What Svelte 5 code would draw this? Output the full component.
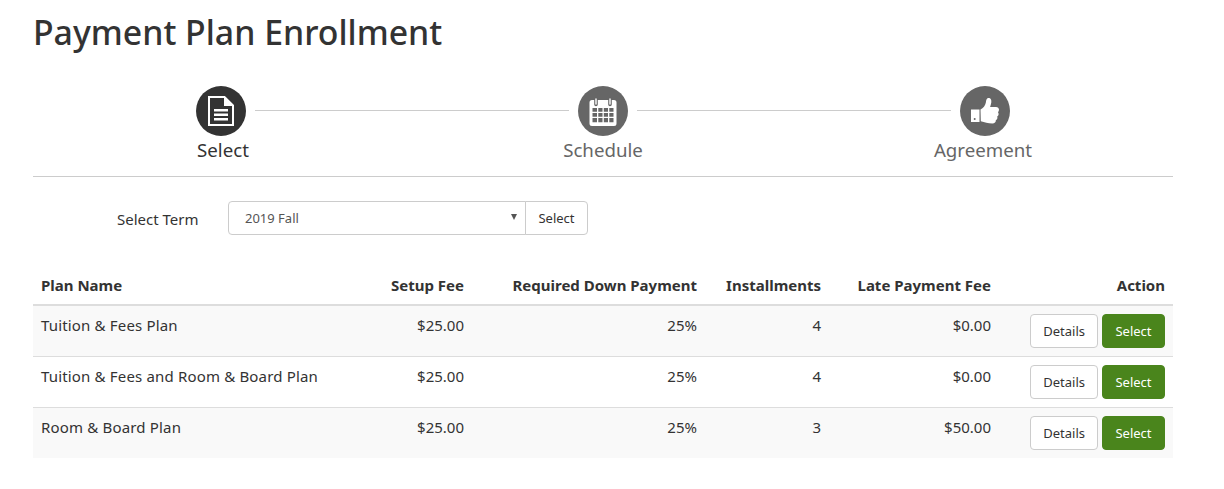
<script>
  const plans = [
    { name: 'Tuition & Fees Plan', setup: '$25.00', down: '25%', inst: 4, late: '$0.00' },
    { name: 'Tuition & Fees and Room & Board Plan', setup: '$25.00', down: '25%', inst: 4, late: '$0.00' },
    { name: 'Room & Board Plan', setup: '$25.00', down: '25%', inst: 3, late: '$50.00' }
  ];
</script>

<main class="page">
  <h1>Payment Plan Enrollment</h1>

  <section class="stepper">
    <div class="track">
      <span class="circle active">
        <svg viewBox="0 0 26 30" width="26" height="30">
          <path d="M1 1h15.500L25 9.500V29H1z" fill="none" stroke="#fff" stroke-width="2"/>
          <path d="M16 1v9h9z" fill="#fff"/>
          <path d="M6 13h14v2.500H6zM6 17.500h14V20H6zM6 22h14v2.500H6z" fill="#fff"/>
        </svg>
      </span>
      <span class="line"></span>
      <span class="circle">
        <svg viewBox="0 0 28 29" width="28" height="29">
          <path d="M3 3h22a2.500 2.500 0 0 1 2.500 2.500v21A2.500 2.500 0 0 1 25 29H3A2.500 2.500 0 0 1 .500 26.500v-21A2.500 2.500 0 0 1 3 3z" fill="#fff"/>
          <path d="M7 2.500v5M21 2.500v5" stroke="#666" stroke-width="3.600" stroke-linecap="round"/>
          <path d="M7 2v5M21 2v5" stroke="#fff" stroke-width="1.400" stroke-linecap="round"/>
          <path d="M3.500 11h4.500v3.700H3.500zM9.300 11h4.200v3.700H9.300zM14.800 11h4.200v3.700h-4.200zM20.300 11h4.200v3.700h-4.200zM3.500 16h4.500v3.700H3.500zM9.300 16h4.200v3.700H9.300zM14.800 16h4.200v3.700h-4.200zM20.300 16h4.200v3.700h-4.200zM3.500 21h4.500v4.300H3.500zM9.300 21h4.200v4.300H9.300zM14.800 21h4.200v4.300h-4.200zM20.300 21h4.200v4.300h-4.200z" fill="#666"/>
        </svg>
      </span>
      <span class="line"></span>
      <span class="circle">
        <svg viewBox="0 0 28 26" width="28" height="26">
          <path d="M0 11.500h8.500v12.500H0z" fill="#fff"/>
          <circle cx="3.700" cy="21" r="1" fill="#666"/>
          <path d="M9.500 11.500c2.800-1.500 4.700-3.800 5.300-6.800.4-2 .6-4.700 2.800-4.700 2.400 0 3 2.300 2.700 4.500-.2 1.500-.8 3-1.200 4.500h5.900c1.800 0 3 1.200 3 2.800 0 1-.4 1.800-1 2.400.4.600.6 1.200.6 1.900 0 1-.5 1.900-1.400 2.400.1.400.2.800.2 1.200 0 1-.6 1.900-1.500 2.400.1 2-1.300 3.400-3.500 3.400-4.500 0-7.700-1.100-11.600-2.300z" fill="#fff"/>
        </svg>
      </span>
    </div>
    <div class="labels">
      <span class="active-label">Select</span>
      <span>Schedule</span>
      <span>Agreement</span>
    </div>
  </section>

  <form class="term" onsubmit={(e) => e.preventDefault()}>
    <span class="term-label">Select Term</span>
    <div class="select">
      <span>2019 Fall</span>
      <i class="caret"></i>
    </div>
    <button class="btn addon" type="button">Select</button>
  </form>

  <table>
    <colgroup>
      <col class="c1" /><col class="c2" /><col class="c3" /><col class="c4" /><col class="c5" /><col class="c6" />
    </colgroup>
    <thead>
      <tr>
        <th class="left">Plan Name</th>
        <th>Setup Fee</th>
        <th>Required Down Payment</th>
        <th>Installments</th>
        <th>Late Payment Fee</th>
        <th>Action</th>
      </tr>
    </thead>
    <tbody>
      {#each plans as p, i}
        <tr class:odd={i % 2 === 0}>
          <td class="left">{p.name}</td>
          <td>{p.setup}</td>
          <td>{p.down}</td>
          <td>{p.inst}</td>
          <td>{p.late}</td>
          <td class="actions">
            <button class="btn" type="button">Details</button>
            <button class="btn primary" type="button">Select</button>
          </td>
        </tr>
      {/each}
    </tbody>
  </table>
</main>

<style>
  :global(body) {
    margin: 0;
    background: #fff;
    color: #333;
    font-family: "Noto Sans", "Open Sans", sans-serif;
    font-size: 15px;
  }
  .page {
    width: 1140px;
    margin-left: 33px;
  }
  h1 {
    margin: 0;
    padding-top: 10px;
    font-size: 33.800px;
    line-height: 44px;
    font-weight: 500;
    color: #333;
  }
  .stepper {
    margin-top: 32px;
    height: 90px;
    border-bottom: 1px solid #ccc;
  }
  .track {
    display: flex;
    align-items: center;
    gap: 9px;
    padding: 0 163px;
  }
  .circle {
    flex: none;
    width: 50px;
    height: 50px;
    border-radius: 50%;
    background: #666;
    display: flex;
    align-items: center;
    justify-content: center;
  }
  .circle.active {
    background: #333;
  }
  .line {
    flex: 1;
    height: 1px;
    background: #ccc;
    margin-top: -1px;
  }
  .labels {
    display: grid;
    grid-template-columns: repeat(3, 1fr);
    text-align: center;
    font-size: 18.700px;
    line-height: 26px;
    padding-top: 1px;
    color: #666;
  }
  .active-label {
    color: #333;
  }
  .term {
    display: flex;
    align-items: center;
    margin: 24px 0 0 84px;
    height: 34px;
  }
  .term-label {
    width: 111px;
    line-height: 36px;
    padding-top: 2px;
  }
  .select {
    box-sizing: border-box;
    width: 298px;
    height: 34px;
    border: 1px solid #ccc;
    border-radius: 4px 0 0 4px;
    padding: 0 8px 0 16px;
    display: flex;
    align-items: center;
    justify-content: space-between;
    font-size: 13px;
    color: #555;
  }
  .caret {
    width: 0;
    height: 0;
    border-left: 3.500px solid transparent;
    border-right: 3.500px solid transparent;
    border-top: 6px solid #555;
    margin-top: -2px;
  }
  .btn {
    box-sizing: border-box;
    height: 34px;
    padding: 0 12px;
    border: 1px solid #ccc;
    border-radius: 4px;
    background: #fff;
    color: #333;
    font: inherit;
    font-size: 13px;
  }
  .addon {
    margin-left: -1px;
    width: 63px;
    padding: 0;
    border-radius: 0 4px 4px 0;
  }
  table {
    width: 1140px;
    margin-top: 32px;
    table-layout: fixed;
    border-collapse: separate;
    border-spacing: 0;
  }
  .c1 { width: 310px; }
  .c2 { width: 129px; }
  .c3 { width: 233px; }
  .c4 { width: 124px; }
  .c5 { width: 170px; }
  .c6 { width: 174px; }
  th {
    height: 39px;
    box-sizing: border-box;
    padding: 0 8px 2px;
    text-align: right;
    font-weight: 700;
    border-bottom: 2px solid #ddd;
  }
  td {
    box-sizing: border-box;
    height: 51px;
    padding: 7px 8px 8px;
    line-height: 24px;
    vertical-align: top;
    text-align: right;
    border-top: 1px solid #ddd;
  }
  tbody tr:first-child td {
    border-top: 0;
    height: 50px;
  }
  td.left {
    text-align: left;
    letter-spacing: 0.170px;
  }
  th.left {
    text-align: left;
  }
  tr.odd td {
    background: #f9f9f9;
  }
  .actions {
    padding: 0 8px;
    vertical-align: middle;
    white-space: nowrap;
  }
  .actions .btn {
    width: 68px;
    padding: 0;
    margin: 0;
  }
  .actions .primary {
    width: 63px;
    margin-left: 0;
    background: #4a851c;
    border-color: #4a851c;
    color: #fff;
  }
</style>
